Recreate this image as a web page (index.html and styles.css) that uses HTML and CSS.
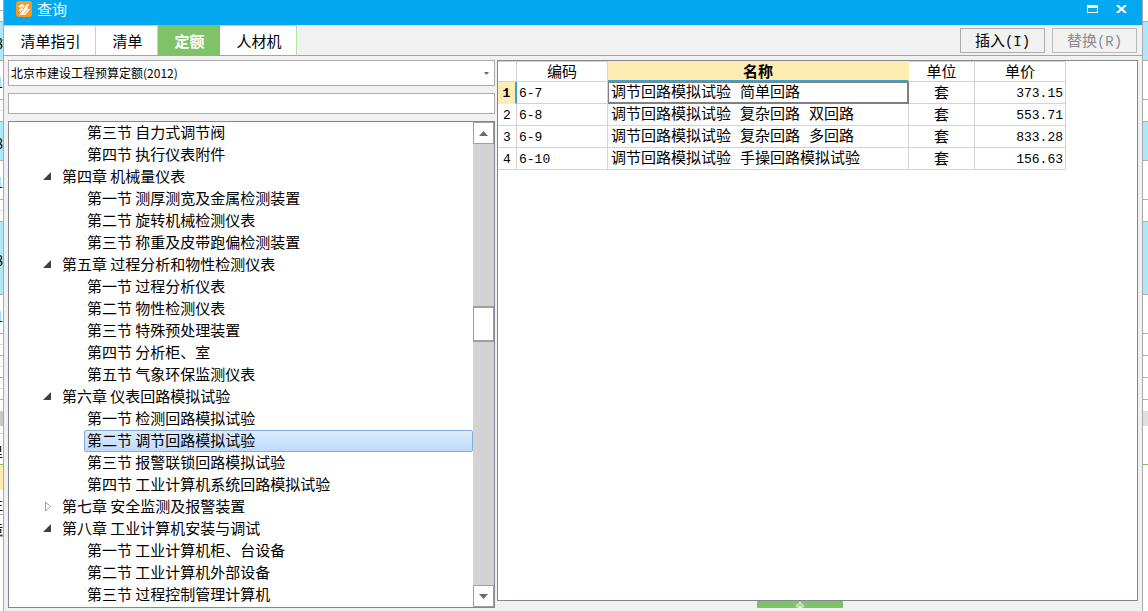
FILE: index.html
```html
<!DOCTYPE html>
<html lang="zh-CN">
<head>
<meta charset="utf-8">
<title>查询</title>
<link rel="stylesheet" href="styles.css">
</head>
<body>
<div class="desktop">
  <div class="sheet sheet-left" aria-hidden="true">
    <div class="s11"></div><div class="s11"></div><div class="s39 cyan">8</div><div class="s39">1</div><div class="s11 pale"></div><div class="s11"></div>
    <div class="s39 cyan">8</div><div class="s39">1</div><div class="s11 pale"></div><div class="s11"></div><div class="s73 cyan">8</div><div class="s39">1</div>
    <div class="s11 pale"></div><div class="s11"></div><div class="s11 pale"></div><div class="s11"></div><div class="s11 pale"></div><div class="s11"></div><div class="s11 bare"></div>
    <div class="s15 gray"></div><div class="s8 light-green"></div><div class="s31 green">里</div><div class="s25 cream"></div><div class="s25">注</div><div class="s22">造</div>
  </div>
  <main class="window">
    <header class="titlebar">
      <svg class="logo" viewBox="0 0 16 16" width="16" height="16"><rect width="16" height="16" rx="3" fill="#f79a1c"/><path d="M1.800 5.800 6.500 2.500 8 5 13.500 2.300 11 7.500 14 8.200 9.500 13.800 3.500 14 4.500 10.500 2.500 9.500 4.500 6.500Z" fill="#fff"/><path d="M9.500 4.500 4.500 12M11.500 9 8 12.500M3.500 8 7 5.500" stroke="#f79a1c" fill="none"/></svg>
      <h1>查询</h1>
      <button class="win-btn" aria-label="最大化"><svg width="11" height="8" viewBox="0 0 11 8"><path d="M0 0H11V8H0ZM1 3V7H10V3Z" fill="#fff" fill-rule="evenodd"/></svg></button>
      <button class="win-btn" aria-label="关闭"><svg width="11" height="8" viewBox="0 0 11 8"><path d="M1 0 10 8M10 0 1 8" stroke="#fff" stroke-width="2.200"/></svg></button>
    </header>
    <div class="toolbar">
      <nav class="tabs">
        <button class="tab wide">清单指引</button><button class="tab">清单</button><button class="tab active">定额</button><button class="tab mid">人材机</button>
      </nav>
      <div class="actions"><button class="action">插入<span class="mono">(I)</span></button><button class="action" disabled>替换<span class="mono">(R)</span></button></div>
    </div>
    <div class="content">
      <section class="browser">
        <div class="combo"><select aria-label="定额库"><option>北京市建设工程预算定额(2012)</option></select><svg width="5" height="3" viewBox="0 0 5 3"><path d="M0 0H5L2.500 3Z" fill="#5f6675"/></svg></div>
        <input class="search" type="text" aria-label="搜索">
        <div class="tree-box">
          <ul class="tree">
            <li><ul><li>第三节 自力式调节阀</li><li>第四节 执行仪表附件</li></ul></li>
            <li><div class="chapter"><button class="toggle open" aria-label="折叠"></button><span>第四章 机械量仪表</span></div>
              <ul><li>第一节 测厚测宽及金属检测装置</li><li>第二节 旋转机械检测仪表</li><li>第三节 称重及皮带跑偏检测装置</li></ul></li>
            <li><div class="chapter"><button class="toggle open" aria-label="折叠"></button><span>第五章 过程分析和物性检测仪表</span></div>
              <ul><li>第一节 过程分析仪表</li><li>第二节 物性检测仪表</li><li>第三节 特殊预处理装置</li><li>第四节 分析柜、室</li><li>第五节 气象环保监测仪表</li></ul></li>
            <li><div class="chapter"><button class="toggle open" aria-label="折叠"></button><span>第六章 仪表回路模拟试验</span></div>
              <ul><li>第一节 检测回路模拟试验</li><li class="selected">第二节 调节回路模拟试验</li><li>第三节 报警联锁回路模拟试验</li><li>第四节 工业计算机系统回路模拟试验</li></ul></li>
            <li><div class="chapter"><button class="toggle" aria-label="展开"><svg width="9" height="11" viewBox="0 0 9 11"><path d="M2.500 1V10L7.500 5.500Z" fill="#fff" stroke="#a0a0a0"/></svg></button><span>第七章 安全监测及报警装置</span></div></li>
            <li><div class="chapter"><button class="toggle open" aria-label="折叠"></button><span>第八章 工业计算机安装与调试</span></div>
              <ul><li>第一节 工业计算机柜、台设备</li><li>第二节 工业计算机外部设备</li><li>第三节 过程控制管理计算机</li></ul></li>
          </ul>
          <div class="scrollbar">
            <button class="scroll-btn" aria-label="向上滚动"><svg width="9" height="5" viewBox="0 0 9 5"><path d="M0 5H9L4.500 0Z" fill="#646b7b"/></svg></button>
            <div class="space-above"></div><div class="thumb"></div><div class="space-below"></div>
            <button class="scroll-btn" aria-label="向下滚动"><svg width="9" height="5" viewBox="0 0 9 5"><path d="M0 0H9L4.500 5Z" fill="#646b7b"/></svg></button>
          </div>
        </div>
      </section>
      <section class="results">
        <div class="grid-box">
          <table>
            <colgroup><col class="c-no"><col class="c-code"><col class="c-name"><col class="c-unit"><col class="c-price"></colgroup>
            <thead><tr><th></th><th>编码</th><th class="current">名称</th><th>单位</th><th>单价</th></tr></thead>
            <tbody>
              <tr class="current-row"><th>1</th><td class="num">6-7</td><td class="name focus">调节回路模拟试验 简单回路</td><td>套</td><td class="num price">373.15</td></tr>
              <tr><th>2</th><td class="num">6-8</td><td class="name">调节回路模拟试验 复杂回路 双回路</td><td>套</td><td class="num price">553.71</td></tr>
              <tr><th>3</th><td class="num">6-9</td><td class="name">调节回路模拟试验 复杂回路 多回路</td><td>套</td><td class="num price">833.28</td></tr>
              <tr><th>4</th><td class="num">6-10</td><td class="name">调节回路模拟试验 手操回路模拟试验</td><td>套</td><td class="num price">156.63</td></tr>
            </tbody>
          </table>
        </div>
        <button class="drawer" aria-label="展开面板"><svg width="10" height="7" viewBox="0 0 10 7"><path d="M1 6 5 1.500 9 6" fill="none" stroke="#c5e5ba" stroke-width="2"/><path d="M2.500 7 5 4.500 7.500 7Z" fill="#fff"/></svg></button>
      </section>
    </div>
  </main>
  <div class="sheet sheet-right" aria-hidden="true">
    <div class="s22"></div><div class="s39 cyan"></div><div class="s39"></div><div class="s22"></div><div class="s39 cyan"></div><div class="s39"></div><div class="s22"></div><div class="s73 cyan"></div><div class="s39"></div><div class="s22"></div><div class="s22"></div><div class="s22"></div><div class="s11 bare"></div><div class="s15 gray soft"></div><div class="s39 green"></div>
  </div>
</div>
</body>
</html>
```
FILE: styles.css
```css
* { box-sizing: border-box; }
body { margin: 0; font: 15px/22px "Noto Sans CJK SC", sans-serif; color: #000; }
button, input, select { font: inherit; color: inherit; margin: 0; padding: 0; border: 0; border-radius: 0; background: none; }
ul { list-style: none; margin: 0; padding: 0; }
svg { display: block; flex: none; }
.mono { font-family: "Liberation Mono", monospace; font-size: 14px; }

.desktop { display: grid; grid-template-columns: 3px minmax(0, 1fr) 5px; height: 100vh; overflow: hidden; }
.sheet { display: flex; flex-direction: column; overflow: hidden; background: #fff; font-size: 14px; }
.sheet div { flex: none; display: flex; align-items: center; justify-content: flex-end; overflow: hidden; padding-top: 4px; border-bottom: 1px solid #b0b0b0; }
.s8 { height: 8px; }
.s11 { height: 11px; }
.s15 { height: 15px; }
.s22 { height: 22px; }
.s25 { height: 25px; }
.s31 { height: 31px; }
.s39 { height: 39px; }
.s73 { height: 73px; }
.sheet .cyan { background: #ade8fa; }
.sheet .pale { border-color: #dcdcdc; }
.sheet .bare { border: 0; }
.sheet .gray { background: #c8c8c8; border: 0; }
.sheet .soft { background: #e0e0e0; }
.sheet .light-green { border-color: #b5e2a5; }
.sheet .green { border-color: #80c269; }
.sheet .cream { background: #ffecb3; border: 0; }

.window { display: flex; flex-direction: column; min-width: 0; border: solid #a9a9a9; border-width: 0 1px; background: #f1f1f1; }
.titlebar { flex: none; display: flex; align-items: flex-start; height: 25px; padding: 1px 6px 0 12px; background: #02a9f1; color: #fff; }
.titlebar h1 { flex: 1; margin: 0; padding-left: 5px; font-size: 15px; font-weight: 400; line-height: 16px; }
.win-btn { display: grid; place-items: center; width: 29px; height: 16px; }

.toolbar { flex: none; display: flex; justify-content: space-between; height: 31px; border-bottom: 1px solid #80c269; }
.tabs { display: flex; }
.tab { width: 62px; padding: 1px 0 0 2px; border: solid #b5e2a5; border-width: 1px 1px 0 0; background: #fff; }
.tab.wide { width: 92px; }
.tab.mid { width: 77px; }
.tab.active { background: #80c269; border-color: #80c269; color: #fff; font-weight: 700; }
.actions { display: flex; gap: 7px; padding: 3px 5px 2px 0; }
.action { width: 85px; border: 1px solid #adadad; background: #f1f1f1; }
.action:disabled { color: #8c8c8c; border-color: #bababa; }

.content { flex: 1; display: grid; grid-template-columns: 487px minmax(0, 1fr); gap: 2px; min-height: 0; padding: 4px 4px 3px; }
.browser { display: flex; flex-direction: column; gap: 7px; min-height: 0; }
.combo { display: flex; align-items: center; height: 26px; padding-right: 5px; border: 1px solid #ababab; background: #fff; }
.combo select { flex: 1; appearance: none; height: 24px; padding-left: 2px; font-size: 12px; }
.search { height: 21px; padding: 0 3px; border: 1px solid #ababab; background: #fff; }
.tree-box { flex: 1; display: flex; min-height: 0; border: 1px solid #828790; background: #fff; }
.tree { flex: 1; overflow: hidden; }
.tree ul { padding-left: 75px; }
.tree ul li { height: 22px; padding-left: 3px; line-height: 20px; }
.tree .selected { border: 1px solid #84acdd; border-radius: 2px; padding-left: 2px; line-height: 18px; background: linear-gradient(#dcebfd, #c1dbfc); }
.chapter { display: flex; gap: 10px; height: 22px; padding-left: 34px; line-height: 20px; }
.toggle { width: 9px; height: 11px; margin-top: 5px; }
.toggle.open { width: 8px; height: 8px; margin: 6px 1px 0 0; background: #404040; clip-path: polygon(100% 0, 100% 100%, 0 100%); }
.scrollbar { display: flex; flex-direction: column; width: 21px; background: #d3d3d3; }
.scroll-btn { display: grid; place-items: center; height: 22px; border: 1px solid #a0a0a0; background: #fff; }
.space-above { flex: 162; }
.space-below { flex: 244; }
.thumb { height: 36px; border: solid #a0a0a0; border-width: 2px 1px; background: #fff; }

.results { display: flex; flex-direction: column; align-items: center; min-width: 0; }
.grid-box { flex: 1; width: 100%; border: 1px solid #828790; background: #fff; }
table { width: 568px; max-width: 100%; table-layout: fixed; border-collapse: separate; border-spacing: 0; }
.c-no { width: 19px; }
.c-code { width: 91px; }
.c-name { width: 301px; }
.c-unit { width: 66px; }
.c-price { width: 91px; }
th, td { height: 22px; padding: 0; border: solid #d3d3d3; border-width: 0 1px 1px 0; font-weight: 400; text-align: center; vertical-align: top; line-height: 19px; white-space: nowrap; }
thead th { height: 21px; line-height: 17px; border-top: 1px solid #d3d3d3; }
thead .current { background: #ffecb3; border-top-color: #ffecb3; border-right-color: #ffecb3; border-bottom: 2px solid #36a3d3; font-weight: 700; }
tbody th, .num { padding-top: 2px; font-family: "Liberation Mono", monospace; font-size: 13px; }
.current-row th { background: #ffecb3; border-right: 2px solid #36a3d3; border-bottom-color: #ffecb3; font-weight: 700; }
td.num { padding-left: 2px; text-align: left; }
td.price { padding-right: 2px; text-align: right; }
.name { padding: 3px 0 0 3px; line-height: 18px; text-align: left; font-family: "Liberation Mono", "Noto Sans CJK SC", monospace; }
.focus { border: solid #808080; border-width: 1px 2px 2px 1px; padding: 2px 0 0 2px; line-height: 17px; }
.drawer { display: grid; place-items: center; width: 86px; height: 7px; margin-right: 35px; background: #80c269; }
```
